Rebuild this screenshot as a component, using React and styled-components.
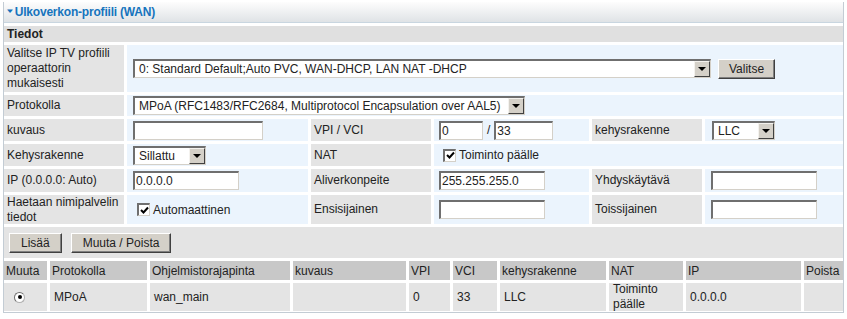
import styled, { createGlobalStyle } from "styled-components"

const Global = createGlobalStyle`
body {
  margin: 0;
  background: #fff;
  font-family: "Liberation Sans", Arial, sans-serif;
  font-size: 12px;
  color: #222;
}
`

const Panel = styled.div`
margin: 2px 3px 0 3px;
border: 1px solid #c3ccd4;
border-top: none;
display: flex;
flex-direction: column;
gap: 3px;
padding-bottom: 1px;
`

const TitleBar = styled.div`
height: 20px;
background: linear-gradient(#fdfdfd, #dfe3e6);
border-bottom: 1px solid #c9d6e0;
display: flex;
align-items: center;
padding-left: 1px;
color: #1674bd;
font-weight: 700;
font-size: 12px;
letter-spacing: -0.2px;
`

const Arrow = styled.span`
font-size: 10px;
margin-right: 0;
position: relative;
top: -2px;
transform: scaleY(0.6);
`

const FormGrid = styled.div`
display: grid;
grid-template-columns: 120px 181px 120px 155px 110px 138px;
grid-template-rows: 16px 47px 21px 22px 22px 23px 29px;
gap: 3px;
`

const SectionHead = styled.div`
grid-column: 1 / -1;
background: #e0e0e0;
font-weight: 700;
display: flex;
align-items: center;
padding-left: 3px;
color: #222;
`

const Label = styled.div`
background: #e4e4e4;
display: flex;
align-items: center;
padding: 0 3px;
line-height: 15px;
`

const Value = styled.div`
grid-column: span ${(p) => p.$span || 1};
background: #ebf4fd;
display: flex;
align-items: center;
padding-left: ${(p) => p.$pad ?? 6}px;
gap: ${(p) => p.$gap || 0}px;
`

const TextInput = styled.div`
box-sizing: border-box;
width: ${(p) => p.$w}px;
height: 19px;
background: #fff;
border-top: 2px solid #6f6f6f;
border-left: 2px solid #6f6f6f;
border-bottom: 1px solid #d4d0c8;
border-right: 1px solid #d4d0c8;
display: flex;
align-items: center;
padding-left: 1px;
`

const SelectBox = styled.div`
box-sizing: border-box;
width: ${(p) => p.$w}px;
height: 19px;
background: #fff;
border-top: 2px solid #6f6f6f;
border-left: 2px solid #6f6f6f;
border-bottom: 1px solid #d4d0c8;
border-right: 1px solid #d4d0c8;
display: flex;
align-items: center;
justify-content: space-between;
padding-left: 4px;
`

const SelectArrow = styled.span`
box-sizing: border-box;
width: 16px;
height: 16px;
background: #d4d0c8;
border-top: 1px solid #f4f2ee;
border-left: 1px solid #f4f2ee;
border-bottom: 1px solid #404040;
border-right: 1px solid #404040;
display: flex;
align-items: center;
justify-content: center;
&::after {
  content: "";
  border-left: 4px solid transparent;
  border-right: 4px solid transparent;
  border-top: 4px solid #000;
}
`

const Button = styled.div`
box-sizing: border-box;
height: 20px;
padding: 0 ${(p) => p.$px || 10}px;
background: #d4d0c8;
border-top: 1px solid #fff;
border-left: 1px solid #fff;
border-bottom: 1px solid #404040;
border-right: 1px solid #404040;
box-shadow: inset -1px -1px #808080;
display: flex;
align-items: center;
color: #222;
`

const CheckBox = styled.span`
box-sizing: border-box;
width: 13px;
height: 13px;
background: #fff;
border-top: 2px solid #6f6f6f;
border-left: 2px solid #6f6f6f;
border-bottom: 1px solid #d4d0c8;
border-right: 1px solid #d4d0c8;
display: inline-flex;
align-items: center;
justify-content: center;
margin-right: 3px;
`

const Slash = styled.span`
margin: 0 4px 0 4px;
`

const ButtonRow = styled.div`
height: 31px;
background: #e4e4e4;
display: flex;
align-items: center;
gap: 9px;
padding-left: 5px;
`

const ListGrid = styled.div`
display: grid;
grid-template-columns: 43px 97px 140px 113px 41px 44px 106px 74px 115px 39px;
grid-template-rows: 19px 28px;
gap: 3px;
`

const HeadCell = styled.div`
background: #c8c8c8;
display: flex;
align-items: center;
padding-left: 2px;
white-space: nowrap;
overflow: hidden;
`

const Cell = styled.div`
background: #e4e4e4;
display: flex;
align-items: center;
padding-left: ${(p) => p.$pad ?? 4}px;
line-height: 15px;
`

const Radio = styled.span`
box-sizing: border-box;
width: 11px;
height: 11px;
border-radius: 50%;
background: #fff;
border: 1px solid #b0b0b0;
border-top-color: #6f6f6f;
border-left-color: #6f6f6f;
display: inline-flex;
align-items: center;
justify-content: center;
&::after {
  content: "";
  width: 4px;
  height: 4px;
  border-radius: 50%;
  background: #000;
}
`

const Check = () => (
  <CheckBox>
    <svg width="9" height="9" viewBox="0 0 9 9">
      <path d="M1 4 L3.5 6.5 L8 1.5" stroke="#000" strokeWidth="2" fill="none" />
    </svg>
  </CheckBox>
)

const Select = ({ w, children }) => (
  <SelectBox $w={w}>
    <span>{children}</span>
    <SelectArrow />
  </SelectBox>
)

const HEAD = ["Muuta", "Protokolla", "Ohjelmistorajapinta", "kuvaus", "VPI", "VCI", "kehysrakenne", "NAT", "IP", "Poista"]

const App = () => {
  return (
    <>
      <Global />
      <Panel>
        <TitleBar>
          <Arrow>▼</Arrow>Ulkoverkon-profiili (WAN)
        </TitleBar>

        <FormGrid>
          <SectionHead>Tiedot</SectionHead>

          <Label>Valitse IP TV profiili operaattorin mukaisesti</Label>
          <Value $span={5} $gap={7}>
            <Select w={578}>0: Standard Default;Auto PVC, WAN-DHCP, LAN NAT -DHCP</Select>
            <Button $px={10}>Valitse</Button>
          </Value>

          <Label>Protokolla</Label>
          <Value $span={5}>
            <Select w={392}>MPoA (RFC1483/RFC2684, Multiprotocol Encapsulation over AAL5)</Select>
          </Value>

          <Label>kuvaus</Label>
          <Value>
            <TextInput $w={130} />
          </Value>
          <Label>VPI / VCI</Label>
          <Value $pad={5}>
            <TextInput $w={44}>0</TextInput>
            <Slash>/</Slash>
            <TextInput $w={59}>33</TextInput>
          </Value>
          <Label>kehysrakenne</Label>
          <Value $pad={7}>
            <Select w={63}>LLC</Select>
          </Value>

          <Label>Kehysrakenne</Label>
          <Value>
            <Select w={73}>Sillattu</Select>
          </Value>
          <Label>NAT</Label>
          <Value $span={3} $pad={9}>
            <Check />
            Toiminto päälle
          </Value>

          <Label>IP (0.0.0.0: Auto)</Label>
          <Value>
            <TextInput $w={106}>0.0.0.0</TextInput>
          </Value>
          <Label>Aliverkonpeite</Label>
          <Value $pad={5}>
            <TextInput $w={106}>255.255.255.0</TextInput>
          </Value>
          <Label>Yhdyskäytävä</Label>
          <Value>
            <TextInput $w={106} />
          </Value>

          <Label>Haetaan nimipalvelin tiedot</Label>
          <Value $pad={10}>
            <Check />
            Automaattinen
          </Value>
          <Label>Ensisijainen</Label>
          <Value $pad={5}>
            <TextInput $w={106} />
          </Value>
          <Label>Toissijainen</Label>
          <Value>
            <TextInput $w={106} />
          </Value>
        </FormGrid>

        <ButtonRow>
          <Button $px={11}>Lisää</Button>
          <Button $px={11}>Muuta / Poista</Button>
        </ButtonRow>

        <ListGrid>
          {HEAD.map((h, i) => (
            <HeadCell key={String(i)}>{h}</HeadCell>
          ))}
          <Cell $pad={10}>
            <Radio />
          </Cell>
          <Cell>MPoA</Cell>
          <Cell>wan_main</Cell>
          <Cell />
          <Cell>0</Cell>
          <Cell>33</Cell>
          <Cell>LLC</Cell>
          <Cell>
            Toiminto
            <br />
            päälle
          </Cell>
          <Cell>0.0.0.0</Cell>
          <Cell />
        </ListGrid>
      </Panel>
    </>
  )
}

export default App
